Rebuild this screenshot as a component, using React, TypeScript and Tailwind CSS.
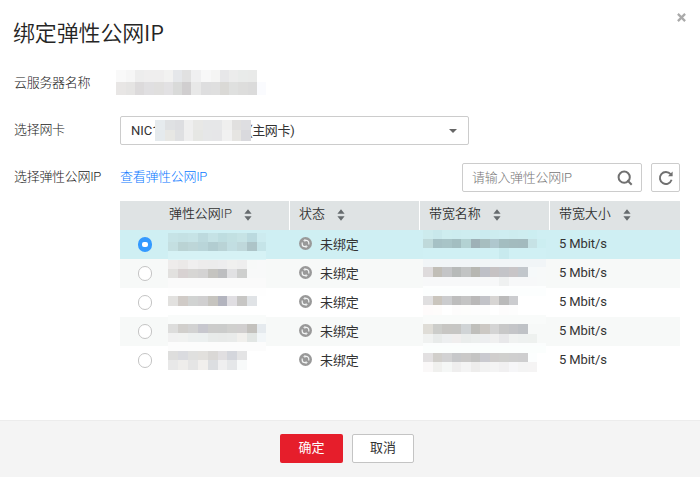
import React from 'react';

type Strip = { h: number; colors: string };

// A redacted value, built from strips of small coloured blocks.
function Mosaic({ strips, widths }: { strips: Strip[]; widths: number[] }) {
  return (
    <span className="flex flex-col">
      {strips.map((s, i) => (
        <span key={i} className="flex shrink-0" style={{ height: s.h }}>
          {s.colors &&
            s.colors.split(' ').map((c, j, all) => (
              <span
                key={j}
                className="shrink-0"
                style={{
                  width: all.length === 1 ? widths.reduce((a, b) => a + b, 0) : widths[j],
                  background: '#' + c,
                }}
              />
            ))}
        </span>
      ))}
    </span>
  );
}

const IP_W = [10, 10, 10, 10, 10, 9, 10, 10, 10, 9];
const NAME_W = [10, 9, 10, 9, 10, 9, 10, 9, 10, 9, 10, 9, 9];
const SERVER_W = [10, 9, 9, 10, 10, 9, 9, 9, 10, 10, 9, 9, 9, 10, 9, 9];
const NIC_W = [10, 10, 9, 9, 10, 9, 10, 10, 9, 9, 1];

type Row = { selected?: boolean; bg: string; ip: Strip[]; name: Strip[] };

const rows: Row[] = [
  {
    selected: true,
    bg: 'bg-[#cfeff3]',
    ip: [
      { h: 3, colors: '' },
      { h: 9, colors: 'c6e3e6 c4e1e4 c6e3e6 bddade c5e2e5 bedde0 c2e0e2 c6e3e5 bbdadf cdebef' },
      { h: 9, colors: 'c4dfe1 bad3d4 bdd6d8 b9d5d9 b2cdd1 b9d3d6 c2dee2 bfd8db adc4c8 c5e4e8' },
      { h: 8, colors: 'd6f2f5' },
    ],
    name: [
      { h: 9, colors: 'cdebed c9e8eb ceedef cdecef ceedf0 ceedf0 cbebef cdecef ceedf1 cdecef ceedf0 cceef1 cfeff3' },
      { h: 9, colors: 'bfd9da a6c1c5 a8c4c7 a3bec1 b3d2d3 9eb1b7 a7bebf afc7ce a3bdc0 a3bbbe a3babe c6e2e5 cceef1' },
      { h: 11, colors: 'd0f0f4 d0f0f4 d0f0f4 d0f0f4 d0f0f4 d0f0f4 d0f0f4 d0f0f4 c8eaee d0f0f4 d0f0f4 d0f0f4 d0f0f4' },
    ],
  },
  {
    bg: 'bg-[#f7f9f8]',
    ip: [
      { h: 1, colors: 'dff5f7' },
      { h: 9, colors: 'eeeceb ebe9e8 f0efef edecec ececec ededee f0f0ef eeeeee f7f9f8 f8f9f9' },
      { h: 9, colors: 'e2e1df d8d2d2 d7d6d4 d4d3d3 c5c4c0 bdbec0 e1e1e3 cecfce f8f9f9 f8f9f9' },
      { h: 10, colors: 'fafafa' },
    ],
    name: [
      { h: 8, colors: 'f1f5f7' },
      { h: 10, colors: 'dedbdc c1beb7 c4c5c7 b7bab9 c2c4c4 b7b7b2 bec0c7 c6c2c3 c3c4c8 c8c5c7 c2c7cc f6f9fa f7f9f9' },
      { h: 9, colors: 'f7f8f9 f7f8f9 f7f8f9 f7f8f9 f7f8f9 f7f8f9 f7f8f9 f7f8f9 eff1f1 f7f8f9 f7f8f9 f7f8f9 f7f9f9' },
      { h: 2, colors: 'fdfefe' },
    ],
  },
  {
    bg: 'bg-white',
    ip: [
      { h: 8, colors: 'fefefe' },
      { h: 10, colors: 'e2e1df d0cbc7 d1d3d2 d0cfd0 c6c4bf b3b4be e0dee2 c7c6c4 e0e3e6 ffffff' },
      { h: 9, colors: 'ffffff' },
      { h: 2, colors: 'f9fbfa' },
    ],
    name: [
      { h: 8, colors: 'fcfefe' },
      { h: 9, colors: 'e0dfe0 cac5bd cbccce bdbdbd c4c4c4 b9b8b8 c2c3c8 d7d5d3 bababa cbcccf ffffff ffffff ffffff' },
      { h: 10, colors: 'fefbfb fefcfb ffffff fdfcfc fdfdfc fdfdfd fdfdfd ffffff fdfcfc fdfdfd ffffff ffffff ffffff' },
      { h: 2, colors: 'f9fbfa' },
    ],
  },
  {
    bg: 'bg-[#f7f9f8]',
    ip: [
      { h: 7, colors: 'f9fbfa' },
      { h: 9, colors: 'dddddc d1cfcc d2d2d2 c7c7ce cccccb cbcccb d0d0ce d1cfcf c3c1bd e5eaee' },
      { h: 9, colors: 'f1f1f1 f1f2f1 edf0f0 ecf0f0 e8ebea e8eae9 e9ebea f1f0ed e2e6e4 f2f6f8' },
      { h: 4, colors: 'fcfcfc' },
    ],
    name: [
      { h: 7, colors: 'f9fbfa' },
      { h: 10, colors: 'dfddd7 cccdca c7c6c3 c6c6c4 d0d4d6 bfbfbb ccc8c4 d4d4d4 c8c8c8 c4c5c8 bfc2c6 f7f9f8 f7f9f8' },
      { h: 9, colors: 'f0f2f1 e8ebea edeff0 f0eeee eaedec ecefee edeef0 f0f0f0 e8e8ea f0f2f1 eef1f0 eef1ef f7f9f8' },
      { h: 3, colors: 'fbfdfd' },
    ],
  },
  {
    bg: 'bg-white',
    ip: [
      { h: 5, colors: 'fcfcfc' },
      { h: 9, colors: 'dededd dadbdf e0e0df e2e0dd dad8d6 e1dfe1 d4d6dc e4e4e5 ffffff ffffff' },
      { h: 10, colors: 'e8e8e8 eeedeb e5e5e5 f1efed dcdee1 efeff0 e5e7e9 f8fafa ffffff ffffff' },
      { h: 5, colors: '' },
    ],
    name: [
      { h: 7, colors: 'fbfefd' },
      { h: 9, colors: 'e2e0e1 d1cfcb d2d2d3 c7c8ca cac9c8 c4c4c3 cacad0 d0cecd d0d0ce cfcfcf cececf fcfefe ffffff' },
      { h: 10, colors: 'faf8f8 f0f0ee f5f7f6 efeeee f4f4f4 eeedec f2f2f2 f4f4f4 f1f0f1 f6f6f8 f4f4f4 f5f4f4 ffffff' },
      { h: 3, colors: '' },
    ],
  },
];

function SortIcon() {
  return (
    <svg width="8" height="12" viewBox="0 0 8 12" className="shrink-0 fill-[#666b6e]">
      <path d="M4 0.3 7.6 4.8H.4zM4 11.7.4 7.2h7.2z" />
    </svg>
  );
}

function StatusIcon() {
  return (
    <svg width="13" height="13" viewBox="0 0 13 13" className="-mt-[2px] shrink-0">
      <circle cx="6.5" cy="6.5" r="6.5" fill="#999" />
      <g fill="none" stroke="#f2f4f4" strokeWidth="1.2">
        <path d="M5.2 3.4H7.2A2.6 2.6 0 0 1 9.8 6V7.4" />
        <path d="M7.8 9.6H5.8A2.6 2.6 0 0 1 3.2 7V5.6" />
        <path d="M6.2 2.2 4.9 3.5 6.2 4.8M6.8 8.2 8.1 9.5 6.8 10.8" strokeWidth="0.9" />
      </g>
    </svg>
  );
}

function HeadCell({ label, pad, divider }: { label: string; pad: string; divider?: boolean }) {
  return (
    <div className={`flex items-center gap-3 pb-[3px] ${pad}`}>
      <span className="tracking-[-0.1px]">{label}</span>
      <span className="pt-[2px]"><SortIcon /></span>
      {divider && <span className="ml-auto -mb-[3px] h-[29px] w-px bg-white" />}
    </div>
  );
}

function Radio({ checked }: { checked?: boolean }) {
  return checked ? (
    <span className="flex h-[15px] w-[14px] shrink-0 items-center justify-center rounded-full bg-[#3399ff]">
      <span className="h-[5px] w-[6px] rounded-[2px] bg-white" />
    </span>
  ) : (
    <span className="h-[15px] w-[14px] shrink-0 rounded-full border border-[#c4c4c4] bg-white" />
  );
}

const COLS = 'grid grid-cols-[170px_130px_130px_130px]';
const LABEL = 'shrink-0 font-light tracking-[-0.3px] text-[#222]';

export default function App() {
  return (
    <div className="flex h-[477px] w-[700px] flex-col overflow-hidden bg-white font-['Roboto','Noto_Sans_CJK_SC',sans-serif] text-[13px] leading-[18px] text-[#333]">
      <header className="flex h-[69px] shrink-0 justify-between pl-[13px]">
        <h1 className="pt-[16px] font-['Noto_Sans_CJK_SC',sans-serif] text-[22px] leading-[30px] font-[350] tracking-[-0.15px] text-[#252525]">绑定弹性公网IP</h1>
        <svg width="9" height="9" viewBox="0 0 10 10" className="mt-[13px] mr-[14px] stroke-[#aaa]" strokeWidth="2.5">
          <path d="M1 1 9 9M9 1 1 9" />
        </svg>
      </header>

      <div className="flex h-[47px] shrink-0 pl-[14px]">
        <span className={`w-[102px] pt-[5px] ${LABEL}`}>云服务器名称</span>
        <span className="pt-px">
          <Mosaic
            widths={SERVER_W}
            strips={[
              { h: 12, colors: 'f9f9f9 f6f6f6 ededed efeeee efeeee f2f2f1 e5e7ea e1e1e1 f0f0f1 f8f8f8 f5f5f4 e7e7e9 ececec e9ebea e9eae9 ffffff' },
              { h: 13, colors: 'e8e6e5 e5e4e3 dcdadb e0dfe1 e0dfde e2e1e3 d9dad9 d0cecf e8e8e8 dededf dfdfdf dad9d6 dfe0df dddddc dbdbdb fafbfe' },
            ]}
          />
        </span>
      </div>

      <div className="flex h-[47px] shrink-0 pl-[14px]">
        <span className={`w-[106px] pt-[5px] ${LABEL}`}>选择网卡</span>
        <div className="flex h-[29px] w-[349px] items-center rounded-[2px] border border-[#ccc] pl-[10px]">
          <span className="w-[24px] whitespace-nowrap">NIC1</span>
          <span className="z-10 mb-px flex">
            <Mosaic
              widths={NIC_W}
              strips={[
                { h: 10, colors: 'e6ebee dfe1e3 dddee1 efefef e8e8e6 e6e7e8 e6e7e8 efefee e1e0df dedee1 dedee1' },
                { h: 11, colors: 'e5eaed e7e7e4 dfe0e2 efefef e6e7e4 e6e7e8 e6e6e8 f1f1f1 e6e5e2 d9d9dd d9d9dd' },
              ]}
            />
          </span>
          <span className="-ml-[3px] tracking-[-0.3px]">(主网卡)</span>
          <svg width="8" height="4" viewBox="0 0 8 4" className="mr-[11px] ml-auto fill-[#666]">
            <path d="M0 0h8L4 4z" />
          </svg>
        </div>
      </div>

      <div className="flex h-[38px] shrink-0 pl-[14px]">
        <span className={`w-[106px] pt-[5px] ${LABEL}`}>选择弹性公网IP</span>
        <a className="pt-[5px] font-light tracking-[-0.3px] text-[#0a78ff]">查看弹性公网IP</a>
        <div className="mr-[20px] ml-auto flex gap-[9px]">
          <div className="flex h-[29px] w-[180px] items-center justify-between rounded-[2px] border border-[#ccc] pr-[8px] pl-[9px]">
            <span className="font-light tracking-[-0.3px] text-[#777]">请输入弹性公网IP</span>
            <svg width="16" height="16" viewBox="0 0 16 16" fill="none" stroke="#707070" strokeWidth="2">
              <circle cx="7.2" cy="7.2" r="5.6" />
              <path d="m10.3 10.3 4.4 4.4" />
            </svg>
          </div>
          <div className="flex h-[29px] w-[29px] items-center justify-center rounded-[2px] border border-[#ccc]">
            <svg width="16" height="16" viewBox="0 0 16 16" fill="none" stroke="#707070" strokeWidth="1.9">
              <path d="M12.6 4.2A6 6 0 1 0 13.6 9.8" />
              <path d="M14.6 1.6v4.6H10z" fill="#707070" stroke="none" />
            </svg>
          </div>
        </div>
      </div>

      <div className="ml-[120px] w-[560px] shrink-0">
        <div className={`${COLS} h-[29px] bg-[#dfe3e4] font-[350]`}>
          <HeadCell label="弹性公网IP" pad="pl-[49px]" divider />
          <HeadCell label="状态" pad="pl-[9px]" divider />
          <HeadCell label="带宽名称" pad="pl-[9px]" divider />
          <HeadCell label="带宽大小" pad="pl-[9px]" />
        </div>
        {rows.map((r, i) => (
          <div key={i} className={`${COLS} h-[29px] ${r.bg}`}>
            <div className="flex">
              <span className="flex w-[48px] items-center pl-[18px]">
                <Radio checked={r.selected} />
              </span>
              <Mosaic widths={IP_W} strips={r.ip} />
            </div>
            <div className="flex items-center gap-[8px] pl-[9px]">
              <StatusIcon />
              <span className="tracking-[-0.1px]">未绑定</span>
            </div>
            <div className="flex pl-[3px]">
              <Mosaic widths={NAME_W} strips={r.name} />
            </div>
            <div className="flex items-center pb-px pl-[9px] tracking-[-0.1px]">5 Mbit/s</div>
          </div>
        ))}
      </div>

      <footer className="mt-auto flex h-[57px] shrink-0 justify-center gap-[9px] border-t border-[#ececec] bg-[#f4f4f4] pt-[13px] pr-[6px]">
        <button className="h-[29px] w-[63px] rounded-[2px] bg-[#e61e2b] pb-px text-white">确定</button>
        <button className="h-[29px] w-[62px] rounded-[2px] border border-[#c4c4c4] bg-white pb-px">取消</button>
      </footer>
    </div>
  );
}
